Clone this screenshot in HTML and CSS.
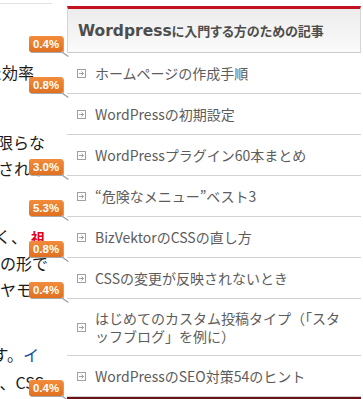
FILE: index.html
```html
<!DOCTYPE html>
<html lang="ja">

<head>
    <meta charset="UTF-8">
    <meta name="viewport" content="width=device-width, initial-scale=1.0">
    <title>Wordpressに入門する方のための記事</title>
    <link rel="stylesheet" href="styles.css">
</head>

<body>
    <div class="page">
        <div class="article">
            <div class="rule"></div>
            <div class="para p1">
                <div class="line end-34"><span>作業をした効率</span></div>
            </div>
            <div class="para p2">
                <div class="line end-45"><span>とは限らな</span></div>
                <div class="line end-46"><span>ておくとされる</span></div>
            </div>
            <div class="para p3">
                <div class="line end-45"><span>やすく、<b class="mark">祖</b></span></div>
                <div class="line end-48"><span>その形で</span></div>
                <div class="line end-48"><span>なヤモリ</span></div>
            </div>
            <div class="para p4">
                <div class="line end-39"><span>ります。<a class="link">イ</a></span></div>
                <div class="line end-44"><span>ただし、CSS</span></div>
            </div>
        </div>

        <aside class="side">
            <h3 class="side-head"><span class="latin">Wordpress</span>に入門する方のための記事</h3>
            <ul class="side-list">
                <li class="item">
                    <span class="rate">0.4%</span>
                    <svg class="ico" viewBox="0 0 9 9"><rect x="0.5" y="0.5" width="8" height="8" /><path d="M2 4.5h4.5M4.5 2.5l2 2-2 2" /></svg>
                    <span>ホームページの作成手順</span>
                </li>
                <li class="item">
                    <span class="rate">0.8%</span>
                    <svg class="ico" viewBox="0 0 9 9"><rect x="0.5" y="0.5" width="8" height="8" /><path d="M2 4.5h4.5M4.5 2.5l2 2-2 2" /></svg>
                    <span>WordPressの初期設定</span>
                </li>
                <li class="item">
                    <svg class="ico" viewBox="0 0 9 9"><rect x="0.5" y="0.5" width="8" height="8" /><path d="M2 4.5h4.5M4.5 2.5l2 2-2 2" /></svg>
                    <span>WordPressプラグイン60本まとめ</span>
                </li>
                <li class="item">
                    <span class="rate">3.0%</span>
                    <svg class="ico" viewBox="0 0 9 9"><rect x="0.5" y="0.5" width="8" height="8" /><path d="M2 4.5h4.5M4.5 2.5l2 2-2 2" /></svg>
                    <span>“危険なメニュー”ベスト3</span>
                </li>
                <li class="item">
                    <span class="rate">5.3%</span>
                    <svg class="ico" viewBox="0 0 9 9"><rect x="0.5" y="0.5" width="8" height="8" /><path d="M2 4.5h4.5M4.5 2.5l2 2-2 2" /></svg>
                    <span>BizVektorのCSSの直し方</span>
                </li>
                <li class="item">
                    <span class="rate">0.8%</span>
                    <svg class="ico" viewBox="0 0 9 9"><rect x="0.5" y="0.5" width="8" height="8" /><path d="M2 4.5h4.5M4.5 2.5l2 2-2 2" /></svg>
                    <span>CSSの変更が反映されないとき</span>
                </li>
                <li class="item wrap">
                    <span class="rate">0.4%</span>
                    <svg class="ico" viewBox="0 0 9 9"><rect x="0.5" y="0.5" width="8" height="8" /><path d="M2 4.5h4.5M4.5 2.5l2 2-2 2" /></svg>
                    <span>はじめてのカスタム投稿タイプ（「スタ<br>ッフブログ」を例に）</span>
                </li>
                <li class="item">
                    <svg class="ico" viewBox="0 0 9 9"><rect x="0.5" y="0.5" width="8" height="8" /><path d="M2 4.5h4.5M4.5 2.5l2 2-2 2" /></svg>
                    <span>WordPressのSEO対策54のヒント</span>
                </li>
            </ul>
            <div class="side-foot">
                <span class="rate">0.4%</span>
            </div>
        </aside>
    </div>
</body>

</html>
```

FILE: styles.css
```css
body {
    margin: 0;
    background: #fff;
    overflow: hidden;
}

.page {
    display: flex;
    align-items: flex-start;
}

/* article text, cut off by the window edge */
.article {
    width: 67px;
    flex-shrink: 0;
    overflow: hidden;
    font-family: "Noto Sans CJK JP", sans-serif;
    font-size: 16px;
    line-height: 26px;
    color: #1a1a1a;
}

.rule {
    width: 52px;
    height: 3px;
    border-bottom: 1px solid #e2e2e2;
}

.p1 { margin-top: 55px; }
.p2 { margin-top: 44px; }
.p3 { margin-top: 42px; }
.p4 { margin-top: 38px; line-height: 28px; }

.line {
    display: flex;
    justify-content: flex-end;
    white-space: nowrap;
}

.line span {
    flex-shrink: 0;
}

.end-34 { padding-right: 33px; }
.end-39 { padding-right: 28px; }
.end-44 { padding-right: 23px; }
.end-45 { padding-right: 22px; }
.end-46 { padding-right: 21px; }
.end-48 { padding-right: 19px; }

.mark {
    color: #e0001b;
    font-size: 14px;
    margin-left: 4px;
}

.link {
    color: #1d4f9c;
}

/* sidebar widget */
.side {
    width: 294px;
    flex-shrink: 0;
    margin-top: 6px;
}

.side-head {
    margin: 0;
    height: 43px;
    display: flex;
    align-items: center;
    padding-left: 10px;
    border-top: 3px solid #c2121f;
    border-left: 1px solid #d6d6d6;
    border-right: 1px solid #d6d6d6;
    border-bottom: 1px solid #cacaca;
    background: linear-gradient(#ececec, #fbfbfb);
    font-family: "Noto Sans CJK JP", sans-serif;
    font-feature-settings: "palt";
    font-size: 13px;
    font-weight: bold;
    color: #4d4d4d;
    white-space: nowrap;
}

.side-head .latin {
    font-family: "DejaVu Sans", sans-serif;
    font-size: 15.5px;
}

.side-list {
    list-style: none;
    margin: 0;
    padding: 0;
}

.item {
    position: relative;
    display: flex;
    align-items: center;
    padding: 11px 10px;
    border-bottom: 1px solid #d2d2d2;
    font-family: "Noto Sans CJK JP", sans-serif;
    font-size: 14px;
    line-height: 18px;
    color: #5c5c5c;
    white-space: nowrap;
}

.item.wrap {
    padding: 10px 10px;
}

.ico {
    width: 9px;
    height: 9px;
    flex-shrink: 0;
    margin-right: 9px;
    fill: none;
    stroke: #a0a0a0;
    stroke-width: 1;
}

.side-foot {
    position: relative;
    height: 6px;
    background: #6b1216;
}

/* click-rate badges laid over the page */
.rate {
    position: absolute;
    left: -38px;
    top: -17px;
    width: 34px;
    height: 16px;
    line-height: 16px;
    text-align: center;
    border-radius: 2px;
    background: linear-gradient(#f28c3c, #e0701f);
    box-shadow: 1px 1px 0 #a8a8a8;
    font-family: "Liberation Sans", Arial, sans-serif;
    font-size: 11.5px;
    font-weight: bold;
    color: #fff;
    z-index: 2;
}

.rate::after {
    content: "";
    position: absolute;
    right: -6px;
    bottom: -3px;
    width: 7px;
    height: 1px;
    background: #999;
    transform: rotate(35deg);
}
```
